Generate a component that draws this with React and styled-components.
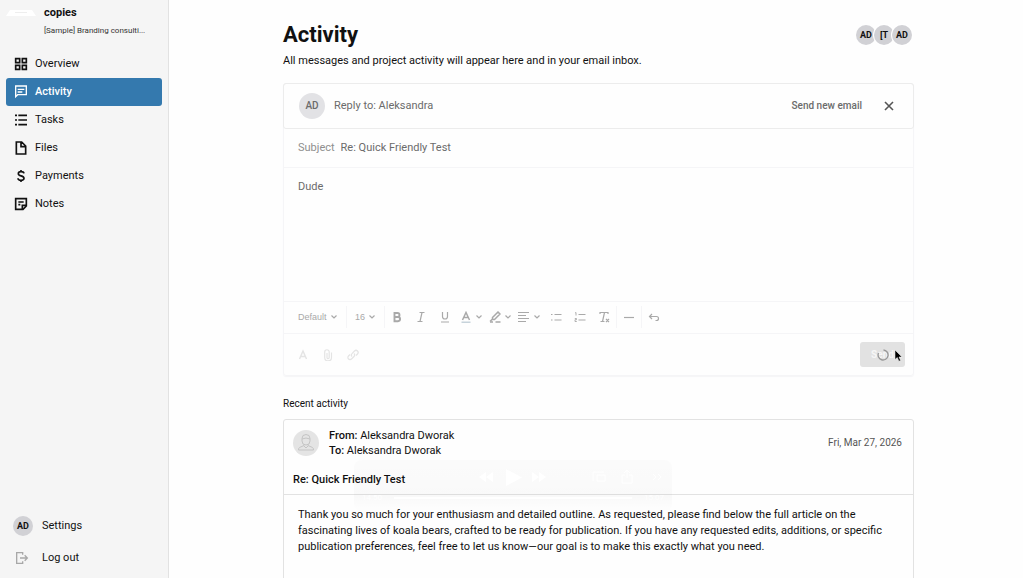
import React from 'react';
import styled, { createGlobalStyle, keyframes } from 'styled-components';

const colors = {
  page: '#fefefe',
  sidebar: '#f5f5f5',
  primary: '#3479ae',
  text: '#111111',
  muted: '#6b6b6b',
  label: '#8f8f8f',
  faded: '#a9a9a9',
  border: '#ececec',
  softBorder: '#f5f5f7',
  strongBorder: '#e2e2e2',
  avatar: '#d1d1d5',
};

const GlobalStyle = createGlobalStyle`
  * {
    box-sizing: border-box;
  }
  body {
    margin: 0;
    background: ${colors.page};
    color: ${colors.text};
    font-family: Roboto, 'Liberation Sans', sans-serif;
    font-size: 11px;
    line-height: 16px;
  }
  button, input, select, textarea {
    margin: 0;
    padding: 0;
    border: none;
    outline: none;
    background: transparent;
    color: inherit;
    font: inherit;
  }
  button {
    cursor: pointer;
  }
  h1, h2, h3, p {
    margin: 0;
  }
`;

const Layout = styled.div`
  display: flex;
  height: 100vh;
  overflow: hidden;
`;

const Sidebar = styled.aside`
  display: flex;
  flex: 0 0 169px;
  flex-direction: column;
  justify-content: space-between;
  padding: 4px 6px;
  background: ${colors.sidebar};
  border-right: 1px solid ${colors.strongBorder};
`;

const Project = styled.div`
  display: flex;
  gap: 8px;
  margin-bottom: 11px;
`;

const Logo = styled.svg`
  flex: none;
  width: 30px;
  height: 18px;
`;

const ProjectName = styled.div`
  font-weight: bold;
  line-height: 18px;
`;

const ProjectClient = styled.div`
  font-size: 8px;
  line-height: 17px;
  color: #333333;
`;

const Nav = styled.nav`
  display: flex;
  flex-direction: column;
`;

const NavLink = styled.a`
  display: flex;
  align-items: center;
  gap: 6px;
  height: 28px;
  padding-left: 7px;
  border-radius: 3px;
  background: ${props => props.$active ? colors.primary : 'transparent'};
  color: ${props => props.$active ? 'white' : colors.text};
  font-weight: ${props => props.$active ? 500 : 'normal'};
  text-decoration: none;
`;

const NavIcon = styled.svg`
  width: 16px;
  height: 16px;
  fill: none;
  stroke: currentColor;
  stroke-width: ${props => props.$thin ? 2 : 2.5};
`;

const AccountLink = styled(NavLink)`
  gap: 9px;
  height: 32px;
  svg {
    margin-left: 1px;
    margin-right: 3px;
    color: #a8a8a8;
  }
`;

const Avatar = styled.span`
  display: flex;
  flex: none;
  align-items: center;
  justify-content: center;
  width: ${props => props.$large ? '26px' : '20px'};
  height: ${props => props.$large ? '26px' : '20px'};
  border-radius: 50%;
  background: ${props => props.$large ? '#e2e2e5' : colors.avatar};
  color: ${props => props.$large ? colors.muted : colors.text};
  font-size: ${props => props.$large ? '10px' : '9px'};
  font-weight: ${props => props.$large ? 500 : 'bold'};
`;

const Main = styled.main`
  flex: 1;
  min-width: 0;
  padding: 20px 109px 0 114px;
`;

const PageHeader = styled.header`
  display: flex;
  align-items: center;
  justify-content: space-between;
  padding-right: 2px;
`;

const PageTitle = styled.h1`
  font-size: 22px;
  line-height: 30px;
`;

const AvatarStack = styled.div`
  display: flex;
  ${Avatar} + ${Avatar} {
    margin-left: -2px;
    box-shadow: 0 0 0 1px white;
  }
`;

const Intro = styled.p`
  margin: 3px 0 14px;
`;

const Composer = styled.form`
  border: 1px solid ${colors.softBorder};
  border-radius: 3px;
  box-shadow: 0 1px 1px ${colors.softBorder};
  color: ${colors.muted};
`;

const ComposerHeader = styled.div`
  display: flex;
  align-items: center;
  gap: 9px;
  height: 46px;
  margin: -1px;
  padding: 0 16px 0 15px;
  border: 1px solid ${colors.border};
  border-radius: 3px;
`;

const TextButton = styled.button`
  margin-left: auto;
  font-size: 10px;
  font-weight: 500;
`;

const CloseButton = styled.button`
  display: flex;
  margin-left: 10px;
  svg {
    width: 16px;
    height: 16px;
    stroke: #555555;
    stroke-width: 1.6;
  }
`;

const SubjectRow = styled.div`
  display: flex;
  align-items: center;
  gap: 6px;
  height: 40px;
  padding: 0 14px;
  border-bottom: 1px solid ${colors.softBorder};
  label {
    color: ${colors.label};
  }
  input {
    flex: 1;
  }
`;

const Message = styled.textarea`
  display: block;
  width: 100%;
  height: 133px;
  padding: 11px 14px;
  resize: none;
`;

const Toolbar = styled.div`
  display: flex;
  align-items: center;
  height: 33px;
  padding: 0 0 2px 14px;
  border-top: 1px solid ${colors.softBorder};
  border-bottom: 1px solid ${colors.softBorder};
  color: ${colors.faded};
`;

const Picker = styled.span`
  display: flex;
  align-items: center;
  gap: 1px;
  padding-right: 8px;
  select {
    width: ${props => props.$wide ? '31px' : '12px'};
    appearance: none;
    font-family: 'Liberation Sans', sans-serif;
    font-size: 9px;
  }
`;

const Chevron = styled.svg`
  width: 8px;
  height: 8px;
  fill: none;
  stroke: currentColor;
  stroke-width: 1.2;
`;

const Divider = styled.span`
  width: 1px;
  height: 22px;
  margin-right: ${props => props.$gap ? '8px' : 0};
  background: ${colors.softBorder};
`;

const ToolButton = styled.button`
  display: flex;
  align-items: center;
  justify-content: center;
  gap: 3px;
  width: ${props => props.$menu ? '29px' : '24px'};
  height: 24px;
`;

const ToolIcon = styled.svg`
  flex: none;
  width: 12px;
  height: 12px;
  fill: none;
  stroke: currentColor;
  stroke-width: 1.2;
`;

const ComposerFooter = styled.div`
  display: flex;
  align-items: center;
  height: 41px;
  padding: 0 8px 0 7px;
  color: #e4e4e4;
  ${ToolButton} + ${ToolButton} {
    margin-left: 1px;
  }
`;

const SendButton = styled.button`
  position: relative;
  width: 45px;
  height: 25px;
  margin-left: auto;
  border-radius: 3px;
  background: #e2e2e2;
  color: #f6f6f6;
  font-size: 10px;
  font-weight: bold;
`;

const spin = keyframes`
  to {
    transform: rotate(360deg);
  }
`;

const Spinner = styled.svg`
  position: absolute;
  top: 7px;
  left: 17px;
  width: 12px;
  height: 12px;
  fill: none;
  stroke: #999999;
  stroke-width: 1.4;
  animation: ${spin} 1s linear infinite paused;
`;

const Pointer = styled.svg`
  position: absolute;
  top: 7px;
  left: 34px;
  width: 9px;
  height: 13px;
`;

const SectionTitle = styled.h2`
  margin: 20px 0 7px;
  font-size: 10px;
  font-weight: normal;
`;

const ActivityCard = styled.article`
  position: relative;
  min-height: 240px;
  border: 1px solid ${colors.strongBorder};
  border-radius: 3px;
`;

const CardHeader = styled.header`
  padding: 8px 11px 6px 9px;
  border-bottom: 1px solid ${colors.strongBorder};
  h3 {
    margin-top: 14px;
    font-size: 11px;
    font-weight: 500;
    line-height: 16px;
  }
`;

const Sender = styled.div`
  display: flex;
  align-items: center;
  gap: 10px;
  p {
    line-height: 15px;
  }
  b {
    font-weight: 500;
  }
  time {
    margin-left: auto;
    color: #555555;
    font-size: 10px;
  }
`;

const Portrait = styled.svg`
  flex: none;
  width: 26px;
  height: 26px;
  fill: none;
  stroke: #c4c4c4;
`;

const CardBody = styled.p`
  padding: 12px 14px;
  line-height: 16px;
`;

const Player = styled.div`
  position: absolute;
  top: 40px;
  left: 70px;
  width: 318px;
  height: 52px;
  padding: 6px 8px 0;
  border-radius: 8px;
  background: linear-gradient(rgba(0, 0, 0, 0.012), rgba(0, 0, 0, 0.02) 70%, rgba(0, 0, 0, 0));
  color: white;
  font-size: 8px;
  pointer-events: none;
  svg {
    display: block;
    width: 100%;
    height: 22px;
  }
`;

const Track = styled.div`
  display: flex;
  align-items: center;
  gap: 12px;
  height: 20px;
  hr {
    flex: 1;
    margin: 0;
    border: none;
    border-top: 2px solid white;
  }
`;

const navItems = [
  {
    label: 'Overview',
    icon: <path d="M4 4h6v6H4zM14 4h6v6h-6zM4 14h6v6H4zM14 14h6v6h-6z" />,
  },
  {
    label: 'Activity',
    thin: true,
    icon: <path d="M4 3h16v13H7l-3 3zM7 8h10M7 12h7" />,
  },
  {
    label: 'Tasks',
    icon: <path d="M3 5h3M3 12h3M3 19h3M8 5h13M8 12h13M8 19h13" />,
  },
  {
    label: 'Files',
    icon: <path d="M5 3h8l6 6v12H5zM12 3v7h7" />,
  },
  {
    label: 'Payments',
    icon: <path d="M16.500 8C16 6 14 5.500 12 5.500c-2.500 0-4 1-4 3 0 4.500 8.500 2 8.500 7 0 2-2 3-4.500 3s-4.500-1-4.500-3M12 3v3M12 18v3" />,
  },
  {
    label: 'Notes',
    icon: <path d="M4 4h16v11l-5 5H4zM14 20v-6h6M8 9h8M8 13h3" />,
  },
];

const DownChevron = () => (
  <Chevron viewBox="0 0 8 8">
    <path d="M1.500 2.500L4 5l2.500-2.500" />
  </Chevron>
);

const Tool = ({ label, menu, children }) => (
  <ToolButton type="button" aria-label={label} $menu={menu}>
    <ToolIcon viewBox="0 0 12 12">{children}</ToolIcon>
    {menu && <DownChevron />}
  </ToolButton>
);

const EditorToolbar = () => (
  <Toolbar>
    <Picker $wide>
      <select aria-label="Font">
        <option>Default</option>
      </select>
      <DownChevron />
    </Picker>
    <Divider $gap />
    <Picker>
      <select aria-label="Font size">
        <option>16</option>
      </select>
      <DownChevron />
    </Picker>
    <Divider />
    <Tool label="Bold">
      <path strokeWidth="1.900" d="M3.500 2h3a1.900 1.900 0 010 4h-3zM3.500 6h3.500a2 2 0 010 4.200H3.500z" />
    </Tool>
    <Tool label="Italic">
      <path d="M4.500 1.500h5M2.500 10.500h5M7 1.500l-2 9" />
    </Tool>
    <Tool label="Underline">
      <path d="M3.500 1v4.500a2.500 2.500 0 005 0V1M2 11h8" />
    </Tool>
    <Tool label="Text color" menu>
      <path strokeWidth="1.500" d="M2.500 9L6 1.500 9.500 9M3.800 6.500h4.400" />
      <path stroke="#b9c9d3" d="M1.500 11.200h9" />
    </Tool>
    <Tool label="Highlight" menu>
      <path strokeWidth="1.500" d="M3.500 6.500L9 1l2 2-5.500 5.500H3.500zM1 10.500l2.500-2.500M6.500 11h5M1 11h3" />
    </Tool>
    <Tool label="Align" menu>
      <path d="M0 1.500h11M0 4.500h8M0 7.500h11M0 10.500h8" />
    </Tool>
    <Tool label="Bulleted list">
      <path d="M1 3.500h1.500M1 9h1.500M4.500 3.500h7M4.500 9h7" />
    </Tool>
    <Tool label="Numbered list">
      <path d="M4.500 3.500h7M4.500 9h7" />
      <path strokeWidth="0.900" d="M1 2l1-.500v3M.800 7.500h1.700v1.200H1V10.500h1.800" />
    </Tool>
    <Tool label="Clear formatting">
      <path d="M2 3V1.500h8V3M6.500 1.500l-2 9M2.500 10.500h4M8 8l3 3M11 8l-3 3" />
    </Tool>
    <Divider />
    <Tool label="Horizontal line">
      <path d="M1 6.500h10" />
    </Tool>
    <Divider />
    <Tool label="Undo">
      <path d="M4 3L1.500 5.500 4 8M1.500 5.500h7a2 2 0 010 4H7.500" />
    </Tool>
  </Toolbar>
);

const ReplyComposer = () => (
  <Composer onSubmit={e => e.preventDefault()}>
    <ComposerHeader>
      <Avatar $large>AD</Avatar>
      <span>Reply to: Aleksandra</span>
      <TextButton type="button">Send new email</TextButton>
      <CloseButton type="button" aria-label="Close">
        <svg viewBox="0 0 16 16"><path d="M4 4l8 8M12 4l-8 8" /></svg>
      </CloseButton>
    </ComposerHeader>
    <SubjectRow>
      <label htmlFor="subject">Subject</label>
      <input id="subject" defaultValue="Re: Quick Friendly Test" />
    </SubjectRow>
    <Message aria-label="Message" defaultValue="Dude" />
    <EditorToolbar />
    <ComposerFooter>
      <Tool label="Formatting">
        <path strokeWidth="1.500" d="M2.500 10L6 2l3.500 8M3.800 7.500h4.400" />
      </Tool>
      <Tool label="Attach file">
        <path d="M9.500 3.500v5a3.400 3.400 0 01-6.800 0v-5.500a2.200 2.200 0 014.500 0v5.500a1 1 0 01-2.200 0V4" />
      </Tool>
      <Tool label="Insert link">
        <path d="M5 7.500a2 2 0 010-2.800L7.500 2a2 2 0 013 3L9 6.500M7 4.500a2 2 0 010 3L4.500 10a2 2 0 01-3-3L3 5.500" />
      </Tool>
      <SendButton type="submit">
        Send
        <Spinner viewBox="0 0 12 12">
          <path d="M6.500 1a5 5 0 11-5 3" />
        </Spinner>
        <Pointer viewBox="0 0 9 13">
          <path d="M1 1v9.500l2.300-2 1.600 3.700 1.700-.800L5 8h3z" fill="black" stroke="white" strokeWidth="0.500" />
        </Pointer>
      </SendButton>
    </ComposerFooter>
  </Composer>
);

const PlayerControls = () => (
  <Player>
    <svg viewBox="0 0 302 22" fill="white">
      <path d="M124 6v10l-7-5zM131 6v10l-7-5zM144 3v17l16-8.500zM170 6v10l7-5zM177 6v10l7-5z" />
      <path d="M231 15V6h11M235 9h8v6h-8zM263 9h-3v8h10V9h-3M265 12V4l-3 3M265 4l3 3M291 8l3 3-3 3M296 8l3 3-3 3" fill="none" stroke="white" />
    </svg>
    <Track>
      <span>14:50</span>
      <hr />
      <span>15:07</span>
    </Track>
  </Player>
);

const App = () => (
  <>
    <GlobalStyle />
    <Layout>
      <Sidebar>
        <div>
          <Project>
            <Logo viewBox="0 0 30 18">
              <path d="M4 6h22l4 6H0z" fill="white" />
              <path d="M9 8.500h12" stroke="#eeeeee" />
            </Logo>
            <div>
              <ProjectName>copies</ProjectName>
              <ProjectClient>[Sample] Branding consulti...</ProjectClient>
            </div>
          </Project>
          <Nav>
            {navItems.map(item => (
              <NavLink key={item.label} href="#" $active={item.label === 'Activity'}>
                <NavIcon viewBox="0 0 24 24" $thin={item.thin}>{item.icon}</NavIcon>
                {item.label}
              </NavLink>
            ))}
          </Nav>
        </div>
        <Nav>
          <AccountLink href="#">
            <Avatar>AD</Avatar>
            Settings
          </AccountLink>
          <AccountLink href="#">
            <NavIcon viewBox="0 0 24 24" $thin>
              <path d="M13 7V4H4v16h9v-3M9 12h11M16 8l4 4-4 4" />
            </NavIcon>
            Log out
          </AccountLink>
        </Nav>
      </Sidebar>
      <Main>
        <PageHeader>
          <PageTitle>Activity</PageTitle>
          <AvatarStack>
            <Avatar>AD</Avatar>
            <Avatar>[T</Avatar>
            <Avatar>AD</Avatar>
          </AvatarStack>
        </PageHeader>
        <Intro>All messages and project activity will appear here and in your email inbox.</Intro>
        <ReplyComposer />
        <SectionTitle>Recent activity</SectionTitle>
        <ActivityCard>
          <CardHeader>
            <Sender>
              <Portrait viewBox="0 0 26 26">
                <circle cx="13" cy="13" r="13" fill="#e4e4e4" stroke="none" />
                <path d="M9 8.500a4 4 0 018 0v2.500a4 4 0 01-8 0zM9 9q4-2 8 0M11 14.500v1L6.500 17.500Q5.500 18 5.500 20h15q0-2-1-2.500L15 15.500v-1M11 16l2 2 2-2" />
              </Portrait>
              <div>
                <p><b>From:</b> Aleksandra Dworak</p>
                <p><b>To:</b> Aleksandra Dworak</p>
              </div>
              <time dateTime="2026-03-27">Fri, Mar 27, 2026</time>
            </Sender>
            <h3>Re: Quick Friendly Test</h3>
          </CardHeader>
          <CardBody>
            Thank you so much for your enthusiasm and detailed outline. As requested, please find below the full article on the
            fascinating lives of koala bears, crafted to be ready for publication. If you have any requested edits, additions, or specific
            publication preferences, feel free to let us know—our goal is to make this exactly what you need.
          </CardBody>
          <PlayerControls />
        </ActivityCard>
      </Main>
    </Layout>
  </>
);

export default App;
